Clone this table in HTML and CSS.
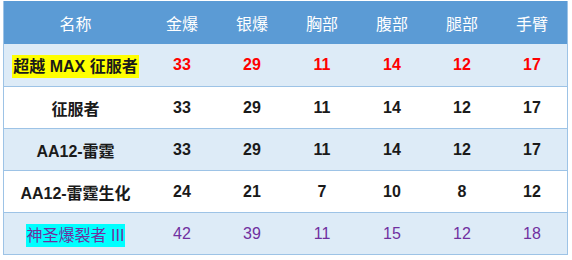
FILE: index.html
```html
<!DOCTYPE html>
<html>
<head>
<meta charset="utf-8">
<link rel="stylesheet" href="styles.css">
</head>
<body>
<table class="tbl">
  <thead>
    <tr class="head">
      <th class="c-name">名称</th><th>金爆</th><th>银爆</th><th>胸部</th><th>腹部</th><th>腿部</th><th>手臂</th>
    </tr>
  </thead>
  <tbody>
    <tr class="alt red">
      <td class="c-name"><span class="hl-yellow">超越 MAX 征服者</span></td><td>33</td><td>29</td><td>11</td><td>14</td><td>12</td><td>17</td>
    </tr>
    <tr>
      <td class="c-name">征服者</td><td>33</td><td>29</td><td>11</td><td>14</td><td>12</td><td>17</td>
    </tr>
    <tr class="alt">
      <td class="c-name">AA12-雷霆</td><td>33</td><td>29</td><td>11</td><td>14</td><td>12</td><td>17</td>
    </tr>
    <tr>
      <td class="c-name">AA12-雷霆生化</td><td>24</td><td>21</td><td>7</td><td>10</td><td>8</td><td>12</td>
    </tr>
    <tr class="alt purple">
      <td class="c-name"><span class="hl-cyan">神圣爆裂者 III</span></td><td>42</td><td>39</td><td>11</td><td>15</td><td>12</td><td>18</td>
    </tr>
  </tbody>
</table>
</body>
</html>
```
FILE: styles.css
```css
html, body {
  margin: 0;
  padding: 0;
  background: #ffffff;
}
body {
  padding: 1px 0 0 3px;
  font-family: "Liberation Sans", "Noto Sans CJK SC", sans-serif;
}
.tbl {
  border-collapse: collapse;
  width: 563px;
  table-layout: fixed;
  border-left: 1px solid #9dc3e6;
  border-right: 1px solid #9dc3e6;
  border-bottom: 1px solid #9dc3e6;
}
.tbl th, .tbl td {
  width: 70px;
  padding: 0;
  text-align: center;
  font-size: 16px;
}
.tbl .c-name {
  width: 143px;
}
.head th {
  height: 43px;
  background: #5b9bd5;
  color: #ffffff;
  font-weight: normal;
}
.tbl td {
  height: 41px;
  color: #1a1a1a;
  font-weight: 600;
  border-top: 1px solid #9dc3e6;
}
.tbl tbody tr:first-child td {
  border-top: none;
  height: 42px;
}
.alt td {
  background: #ddebf7;
}
.red td {
  color: #ff0000;
}
.red td.c-name {
  color: #1a1a1a;
}
.purple td {
  color: #7030a0;
  font-weight: normal;
}
.hl-yellow {
  background: #ffff00;
  padding: 3px 1px;
}
.hl-cyan {
  background: #00ffff;
  padding: 3px 1px;
}
```
